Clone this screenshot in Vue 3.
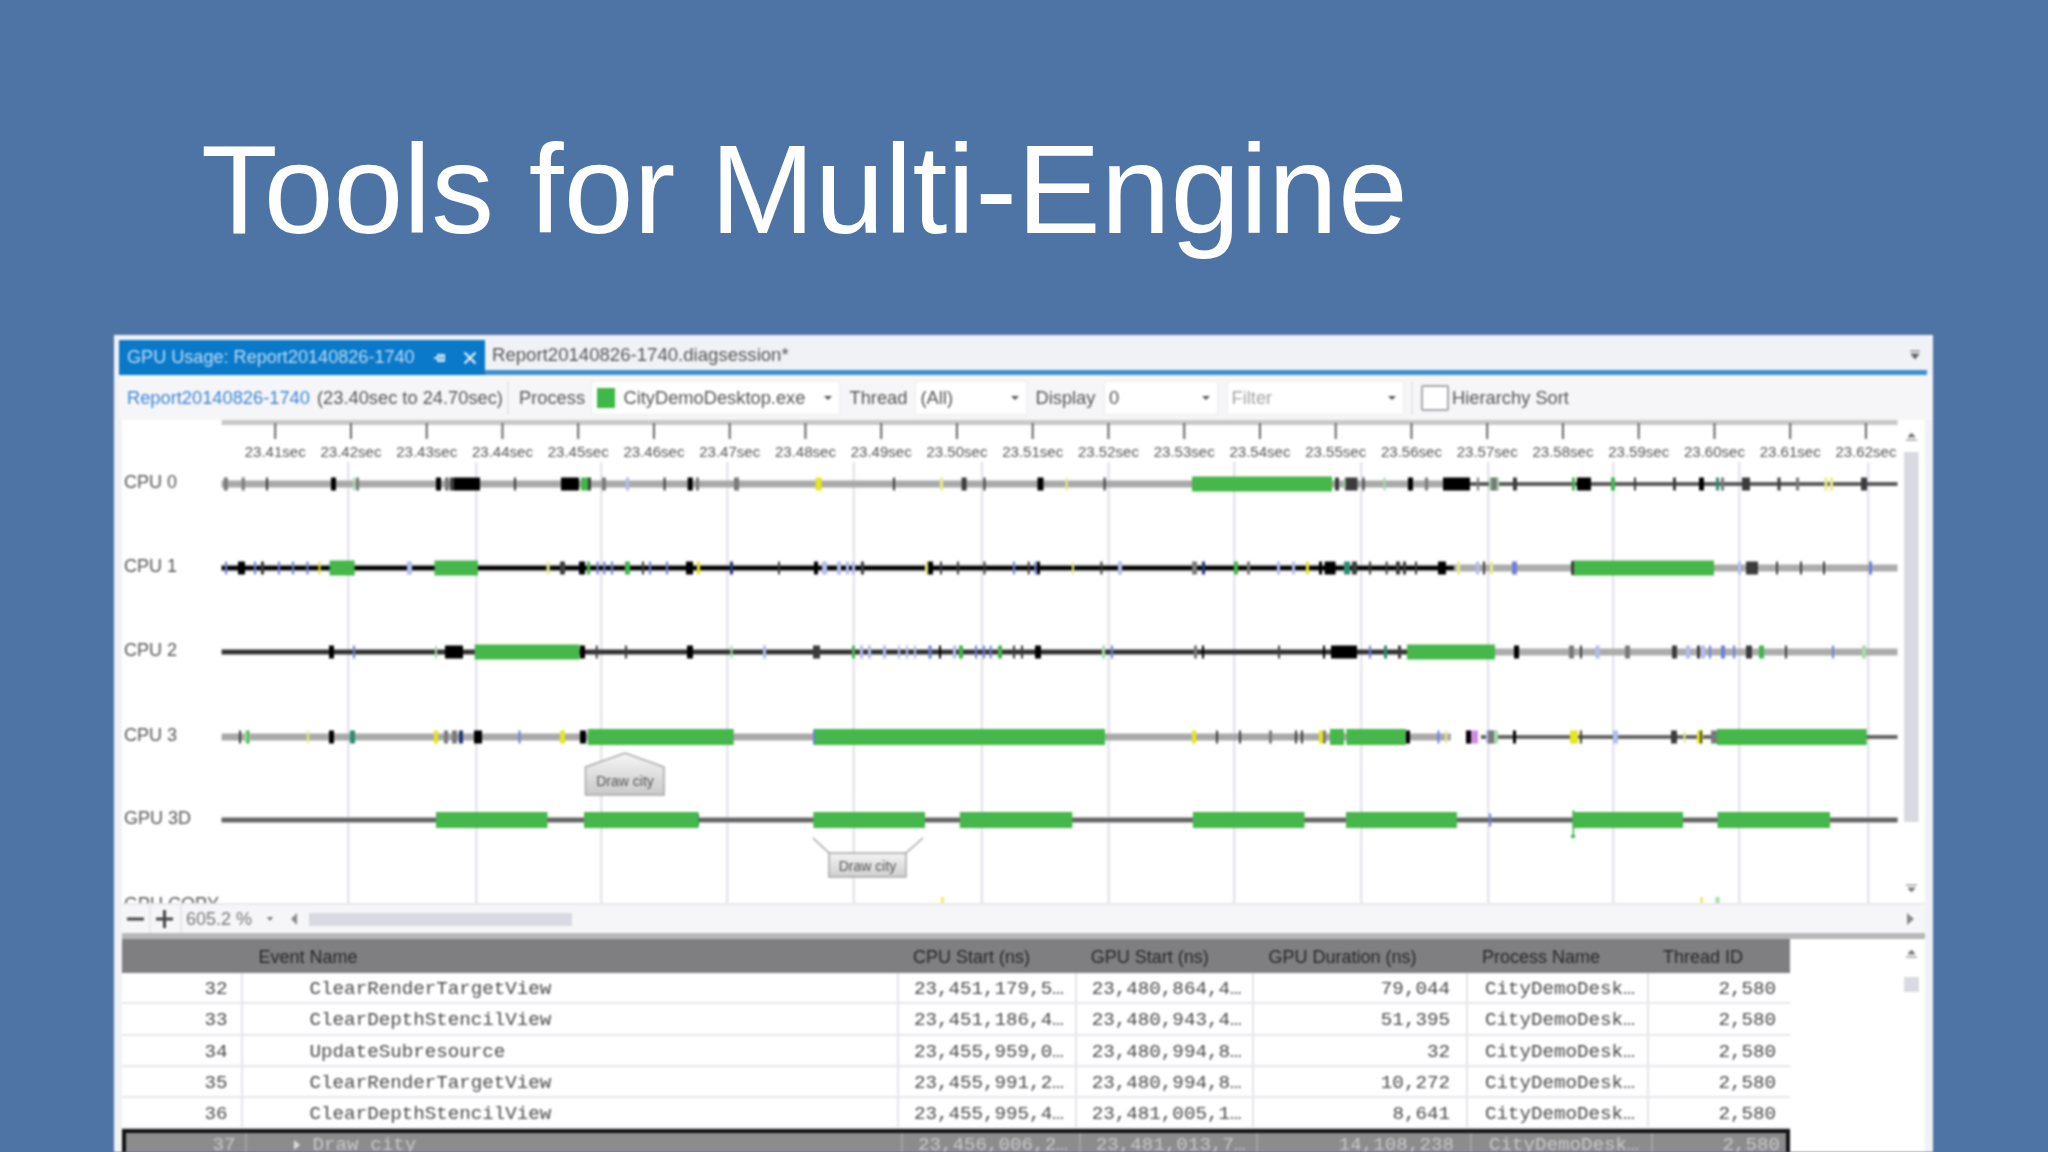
<script setup>
const colors = { k: '#000', d: '#3c3c3c', g: '#7a7a7a', b: '#6f7fd8', l: '#b3bcee', y: '#e4e81c', u: '#e9ec8a', n: '#3fb84a', m: '#a6dcab', t: '#2b8c72', p: '#d28be2', a: '#24337a' }

const ticks = Array.from({ length: 22 }, (_, i) => ({ x: 275.2 + 75.75 * i, label: (23.41 + i / 100).toFixed(2) + 'sec' }))
const grid = [348, 476, 601, 727, 853.6, 981.7, 1108.5, 1234, 1361, 1488, 1613, 1739, 1868]

const m = (s) => s.trim().split(/\s+/).map((t) => { const [x, w, c] = t.split(','); return { x: +x, w: +w, c: colors[c] } })

const tracks = [
  {
    label: 'CPU 0', y: 484,
    lines: [[221.6, 1470, 7, '#a9a9a9'], [1470, 1897.5, 4, '#5c5c5c']],
    greens: [[1192, 1332]], gh: 15,
    marks: m(`223.8,4,g 241.7,3,g 266,2,d 331,5,k 353,2,m 356,3,g 436,5,k 445,4,g 450,4,d 454,26,k 514,2,d 561,18,k 581,8,n 588,3,d 602,4,g 626,3,l 663.6,2,d 687.7,5,k 696,3,g 734,5,g 815.6,6,y 893,2,d 940,3,u 961.6,5,d 983.5,2,d 1037.5,6,k 1065.6,2,u 1103.6,2,d 1335,4,d 1344,2,m 1345.5,12,d 1362.5,2,d 1383.5,2,m 1408,5,k 1425,3,g 1443,27,k 1477,2,g 1489,10,m 1491,6,g 1513,4,d 1572,3,n 1577,14,k 1611,4,n 1634,2,d 1673,3,d 1699,5,k 1716,3,t 1721,3,g 1742,8,d 1777.5,3,d 1796,3,g 1824.5,3,u 1830,3,u 1861,6,d`)
  },
  {
    label: 'CPU 1', y: 568,
    lines: [[221.6, 1897.5, 7, '#acacac'], [221.6, 1454, 4, '#000']],
    greens: [[329.6, 354.6], [434.5, 478], [1572, 1714]], gh: 15,
    marks: m(`225,2,b 238,7,k 254,2,b 261,3,d 278,2,b 292,2,b 306.4,2,b 318.5,2,y 407,5,l 546.6,3,u 560,5,d 579,6,k 587,3,n 596.6,2,b 603.3,2,b 611,2,b 625,5,n 642,2,d 649,2,b 666,2,b 686,7,k 697,3,y 730,3,a 778,2,d 814,4,k 822,5,l 837,4,l 846,3,l 852,3,l 861,3,d 925,3,u 928,5,k 940,2,d 957,2,d 983.5,2,d 1013,2,b 1027.7,2,d 1034.5,2,b 1037,3,k 1072,2,u 1100.4,2,d 1118,4,l 1192,5,g 1202,3,a 1234,4,n 1247,3,g 1277,3,l 1292,3,l 1306,3,y 1319,3,k 1324.6,11,k 1344,6,t 1352,5,d 1369,2,d 1385.7,2,d 1396,4,d 1403,3,d 1415,2,d 1438,8,k 1457,3,u 1476,3,l 1483,2,d 1490,3,u 1512,5,b 1571,3,d 1738,3,l 1746,12,d 1776,2,d 1800,2,d 1823,2,d 1869,3,b`)
  },
  {
    label: 'CPU 2', y: 652,
    lines: [[221.6, 1407, 5, '#333'], [1407, 1897.5, 7, '#acacac']],
    greens: [[474.7, 579.6], [1407, 1495]], gh: 15,
    marks: m(`329,5,k 353,2,b 435,2,m 445,18,k 580,5,k 595.7,2,d 625,2,d 687,6,k 730.5,2,m 763,3,l 813,7,d 852,3,n 860,3,l 868,3,l 883,3,l 898,2,l 906,2,l 914,2,l 928.5,3,b 939,2,k 953,3,l 959,4,n 975,2,b 983,2,b 989.7,2,b 998,4,n 1013,2,d 1021,2,d 1035,6,k 1102,3,m 1111,2,b 1194,3,g 1202,2,k 1278,2,d 1323,2,k 1331,26,k 1369,2,b 1384,3,t 1398,3,d 1514,5,k 1569,5,g 1580,2,d 1595.5,4,l 1625,5,g 1672,5,d 1686,4,l 1697,3,d 1701,4,l 1709,2,b 1721,4,b 1733,2,b 1746,6,d 1759,5,n 1785,2,d 1832,2,b 1862,4,m`)
  },
  {
    label: 'CPU 3', y: 737,
    lines: [[221.6, 1451, 7, '#a9a9a9'], [1481, 1897.5, 4, '#666']],
    greens: [[587.7, 733.7], [813.4, 1105], [1330, 1344], [1346.4, 1405.8], [1717, 1866.7]], gh: 16,
    marks: m(`239,2,d 245,5,m 247,2,n 307,2,u 329,5,k 350,5,t 434,4,y 444,4,g 452,5,g 459,4,a 474,8,k 518.5,2,b 560,5,y 580,6,k 813,2,b 1192,4,y 1216,2,d 1239,2,d 1269,3,g 1295,2,d 1301,2,d 1319,4,y 1323,3,g 1406,4,k 1437.5,2,b 1445,2,u 1466,5,k 1471,7,p 1486,9,l 1488,6,g 1494,4,m 1513,3,k 1570,8,y 1580,2,d 1613,5,l 1671,6,d 1683.5,2,u 1697,6,y 1700,2,d 1711,6,g`)
  },
  {
    label: 'GPU 3D', y: 820,
    lines: [[221.6, 1897.5, 6, '#a9a9a9'], [221.6, 1897.5, 3, '#555']],
    greens: [[436, 547.5], [584, 698.4], [813.4, 925], [959.8, 1072.3], [1192.9, 1304.5], [1346, 1457], [1572.6, 1683], [1717.5, 1830]], gh: 16,
    marks: m(`698,1,t 1489,2,b`)
  }
]

const cols = [
  { t: '', c: '' }, { t: 'Event Name', c: 'h-event' }, { t: 'CPU Start (ns)', c: '' }, { t: 'GPU Start (ns)', c: '' },
  { t: 'GPU Duration (ns)', c: '' }, { t: 'Process Name', c: '' }, { t: 'Thread ID', c: '' }
]
const rows = [
  ['32', 'ClearRenderTargetView', '23,451,179,5…', '23,480,864,4…', '79,044'],
  ['33', 'ClearDepthStencilView', '23,451,186,4…', '23,480,943,4…', '51,395'],
  ['34', 'UpdateSubresource', '23,455,959,0…', '23,480,994,8…', '32'],
  ['35', 'ClearRenderTargetView', '23,455,991,2…', '23,480,994,8…', '10,272'],
  ['36', 'ClearDepthStencilView', '23,455,995,4…', '23,481,005,1…', '8,641']
]
</script>

<template>
  <div class="page">
    <header class="head"><h1 class="title">Tools for Multi-Engine</h1></header>
    <section class="win">
      <div class="tabs">
        <div class="tab">
          <span class="tab-text">GPU Usage: Report20140826-1740</span>
          <svg class="pin" width="14" height="12" viewBox="0 0 14 12"><path d="M1 6h4M5 3h6v6H5zM8 3v6" fill="none" stroke="#cfe6f7" stroke-width="2" /></svg>
          <svg class="close" width="14" height="14" viewBox="0 0 14 14"><path d="M1.5 1.5l11 11M12.5 1.5l-11 11" stroke="#e4f1fb" stroke-width="2.2" /></svg>
        </div>
        <span class="tab2">Report20140826-1740.diagsession*</span>
        <svg class="tab-menu" width="12" height="10" viewBox="0 0 12 10"><path d="M1 1h10M2 4h8l-4 5z" fill="#666" stroke="#666" /></svg>
      </div>

      <div class="toolbar">
        <span class="link">Report20140826-1740</span>
        <span class="range">(23.40sec to 24.70sec)</span>
        <i class="sep"></i>
        <span class="lbl w-process">Process</span>
        <div class="combo c-process">
          <i class="swatch"></i><span class="combo-text">CityDemoDesktop.exe</span><i class="arrow"></i>
        </div>
        <span class="lbl w-thread">Thread</span>
        <div class="combo c-thread"><span class="combo-text">(All)</span><i class="arrow"></i></div>
        <span class="lbl w-display">Display</span>
        <div class="combo c-display"><span class="combo-text">0</span><i class="arrow"></i></div>
        <div class="combo c-filter"><span class="combo-text muted">Filter</span><i class="arrow"></i></div>
        <i class="sep sep2"></i>
        <i class="check"></i>
        <span class="lbl">Hierarchy Sort</span>
      </div>

      <svg class="chart" width="1803" height="485" viewBox="122 420 1803 485">
        <defs>
          <linearGradient id="up" x1="0" y1="0" x2="0" y2="1"><stop offset="0" stop-color="#f6f6f6" /><stop offset="1" stop-color="#c9c9c9" /></linearGradient>
          <linearGradient id="down" x1="0" y1="0" x2="0" y2="1"><stop offset="0" stop-color="#bdbdbd" /><stop offset=".45" stop-color="#f0f0f0" /><stop offset="1" stop-color="#cfcfcf" /></linearGradient>
          <clipPath id="rulerclip"><rect x="122" y="420" width="1775.5" height="60" /></clipPath>
        </defs>
        <rect x="221.6" y="420" width="1676" height="5" fill="#c9c9c9" />
        <g clip-path="url(#rulerclip)">
          <g v-for="t in ticks" :key="t.x">
            <rect :x="t.x - 1" y="423" width="2" height="16" fill="#666" />
            <text :x="t.x" y="457" text-anchor="middle" class="tick-label">{{ t.label }}</text>
          </g>
        </g>
        <rect v-for="g in grid" :key="g" :x="g - 1" y="462" width="2.4" height="441" fill="#e3e4ec" />

        <g v-for="tr in tracks" :key="tr.label">
          <text x="124" :y="tr.y + 4" class="track-label">{{ tr.label }}</text>
          <rect v-for="(l, i) in tr.lines" :key="'l' + i" :x="l[0]" :y="tr.y - l[2] / 2" :width="l[1] - l[0]" :height="l[2]" :fill="l[3]" />
          <rect v-for="(g, i) in tr.greens" :key="'g' + i" :x="g[0]" :y="tr.y - tr.gh / 2" :width="g[1] - g[0]" :height="tr.gh" fill="#45b74b" />
          <rect v-for="(k, i) in tr.marks" :key="'m' + i" :x="k.x" :y="tr.y - 6.5" :width="k.w" height="13" :fill="k.c" />
        </g>

        <rect x="1572.6" y="810" width="1.6" height="28" fill="#3fb84a" />
        <rect x="1571" y="835" width="4" height="3" fill="#3fb84a" />

        <g>
          <polygon points="585.5,767 625,753 664,767 664,795 585.5,795" fill="url(#up)" stroke="#a8a8a8" stroke-width="1.5" />
          <text x="625" y="786" text-anchor="middle" class="callout">Draw city</text>
        </g>
        <g>
          <polygon points="813,838 829,853 829,877 906,877 906,853 923,838 906,853 829,853" fill="url(#down)" stroke="#a8a8a8" stroke-width="1.5" />
          <text x="867.5" y="871" text-anchor="middle" class="callout">Draw city</text>
        </g>

        <text x="124" y="910" class="track-label">GPU COPY</text>
        <rect x="941.5" y="897" width="2" height="6" fill="#e4e81c" />
        <rect x="1700.5" y="897" width="2" height="6" fill="#e4e81c" />
        <rect x="1715.5" y="897" width="4" height="6" fill="#a6dcab" />

        <rect x="1904" y="452" width="14.6" height="370" fill="#d9dae1" />
        <path d="M1906 440h11M1908 437h7l-3.500-4z" fill="#777" stroke="#777" />
        <path d="M1906 885h11M1908 888h7l-3.500 4z" fill="#777" stroke="#777" />
        <rect x="122" y="903" width="1803" height="2" fill="#e9e9ed" />
      </svg>

      <div class="zoombar">
        <svg class="zb-icon" width="27" height="28" viewBox="0 0 27 28"><path d="M5 14h17" stroke="#444" stroke-width="3" /></svg>
        <svg class="zb-icon" width="29" height="28" viewBox="0 0 29 28"><path d="M5 14h17M13.500 5v18" stroke="#444" stroke-width="3" /></svg>
        <span class="pct">605.2 %</span>
        <i class="zb-drop"></i>
        <i class="zb-left"></i>
        <i class="zb-thumb"></i>
        <i class="zb-right"></i>
      </div>

      <div class="lower">
        <div class="table">
          <div class="row header">
            <span v-for="c in cols" :key="c.t" class="hcell" :class="c.c">{{ c.t }}</span>
          </div>
          <div v-for="r in rows" :key="r[0]" class="row body">
            <span class="cell num">{{ r[0] }}</span>
            <span class="cell name">{{ r[1] }}</span>
            <span class="cell">{{ r[2] }}</span>
            <span class="cell">{{ r[3] }}</span>
            <span class="cell dur">{{ r[4] }}</span>
            <span class="cell proc">CityDemoDesk…</span>
            <span class="cell tid">2,580</span>
          </div>
          <div class="row body selected">
            <span class="cell num">37</span>
            <span class="cell name"><i class="expander"></i>Draw city</span>
            <span class="cell">23,456,006,2…</span>
            <span class="cell">23,481,013,7…</span>
            <span class="cell dur">14,108,238</span>
            <span class="cell proc">CityDemoDesk…</span>
            <span class="cell tid">2,580</span>
          </div>
        </div>
        <div class="tscroll">
          <svg width="15" height="10" viewBox="0 0 15 10" class="t-up"><path d="M2 8h11M4 5h7L7.500 1z" fill="#777" stroke="#777" /></svg>
          <i class="t-thumb"></i>
        </div>
      </div>
    </section>
  </div>
</template>

<style scoped>
.page { width: 2048px; height: 1152px; overflow: hidden; background: #4e74a5; font-family: "Liberation Sans", Arial, sans-serif; }
.head { height: 335px; box-sizing: border-box; padding: 127px 0 0 201px; }
.title { margin: 0; font-size: 125.500px; line-height: 125px; font-weight: 400; color: #fff; white-space: nowrap; }

.win { margin-left: 113.6px; width: 1819.4px; height: 817px; box-sizing: border-box; background: #f1f2f6; padding-left: 5.4px; display: flex; flex-direction: column; filter: blur(.8px); overflow: hidden; }

.tabs { height: 30px; padding-top: 5px; flex: none; width: 1808px; box-sizing: content-box; border-bottom: 5px solid #3a90d2; display: flex; align-items: stretch; position: relative; color: #555; font-size: 18.100px; }
.tab { width: 366px; background: #0a79c9; display: flex; align-items: center; padding-left: 8px; box-sizing: border-box; color: #bcdcf4; height: 35px; }
.tab-text { width: 292px; white-space: nowrap; }
.pin { margin-left: 14px; }
.close { margin-left: 16px; }
.tab2 { margin-left: 7px; align-self: center; white-space: nowrap; font-size: 18.600px; }
.tab-menu { margin-left: auto; margin-right: 6px; align-self: center; }

.toolbar { height: 45px; flex: none; box-sizing: border-box; display: flex; align-items: center; font-size: 18.300px; color: #555; padding-left: 8px; background: #f6f6f8; white-space: nowrap; }
.link { color: #3c86d6; width: 190px; }
.range { width: 186px; }
.sep { width: 2px; height: 34px; background: #e6e6ea; margin: 0 10px 0 4px; }
.sep2 { margin: 0 8px 0 7px; }
.lbl { flex: none; }
.w-process { width: 72.500px; }
.w-thread { width: 66px; }
.w-display { width: 68.600px; }
.combo { height: 34px; background: #fff; border: 1px solid #eceded; box-sizing: border-box; display: flex; align-items: center; position: relative; flex: none; }
.combo-text { margin-left: 4px; }
.muted { color: #a5a5a5; }
.arrow { position: absolute; right: 7px; top: 14px; width: 0; height: 0; border-left: 4px solid transparent; border-right: 4px solid transparent; border-top: 4px solid #555; }
.c-process { width: 249px; margin-right: 9px; }
.swatch { width: 18px; height: 20px; background: #3fb84a; margin-left: 5px; margin-right: 4px; }
.c-thread { width: 112px; margin-right: 8px; }
.c-display { width: 113.500px; margin-right: 9px; }
.c-filter { width: 177.500px; }
.check { width: 24px; height: 22px; background: #fff; border: 2px solid #a8a8ac; border-radius: 2px; margin-right: 3px; flex: none; }

.chart { flex: none; display: block; margin-left: 3px; background: #fff; }
.tick-label { font-size: 15px; fill: #555; }
.track-label { font-size: 18px; fill: #555; }
.callout { font-size: 14px; fill: #555; }

.zoombar { height: 28px; flex: none; background: #f6f6f8; margin-left: 3px; width: 1803px; display: flex; align-items: center; position: relative; color: #777; }
.zb-icon { border-right: 2px solid #e8e8ec; flex: none; box-sizing: content-box; }
.pct { margin-left: 4px; font-size: 18px; width: 76px; white-space: nowrap; }
.zb-drop { width: 0; height: 0; border-left: 3.500px solid transparent; border-right: 3.500px solid transparent; border-top: 4px solid #777; margin-left: 5px; }
.zb-left { width: 0; height: 0; border-top: 6px solid transparent; border-bottom: 6px solid transparent; border-right: 6px solid #888; margin-left: 18px; }
.zb-thumb { width: 263px; height: 13px; background: #d9dae1; margin-left: 12px; }
.zb-right { width: 0; height: 0; border-top: 6px solid transparent; border-bottom: 6px solid transparent; border-left: 7px solid #888; margin-left: auto; margin-right: 11px; }

.lower { flex: 1; margin-left: 3px; width: 1803px; border-top: 6px solid #b7b7b9; background: #fff; display: flex; min-height: 0; }
.table { width: 1668px; flex: none; }
.row { display: grid; grid-template-columns: 120.600px 656.400px 177.800px 177.700px 213.500px 181px 141px; }
.header { height: 34px; background: #7f7f82; font-size: 18px; color: #262626; align-items: center; }
.hcell { padding: 3px 0 0 14px; white-space: nowrap; }
.h-event { padding-left: 16px; }
.body { height: 31.300px; box-sizing: border-box; border-bottom: 2px solid #e6e7ec; font: 19.200px/29px "Liberation Mono", monospace; color: #4a4a4a; }
.cell { border-right: 2px solid #e4e5ec; padding-left: 15px; padding-top: 2px; white-space: pre; overflow: hidden; }
.cell.num { text-align: right; padding-right: 13px; padding-left: 0; }
.cell.name { padding-left: 67px; }
.cell.dur { text-align: right; padding-right: 16px; padding-left: 0; }
.cell.proc { padding-left: 17px; }
.cell.tid { text-align: right; padding-right: 14px; padding-left: 0; border-right: 0; }
.selected { height: 36px; border: 4px solid #111; background: #8c8c8d; color: #c9c9cb; line-height: 25px; }
.selected .cell { border-right-color: #a2a2a4; padding-top: 0; }
.selected .cell.num { padding-right: 9px; }
.expander { display: inline-block; width: 0; height: 0; border-top: 5px solid transparent; border-bottom: 5px solid transparent; border-left: 6px solid #ddd; margin: 0 13px 0 -20px; }

.tscroll { margin-left: 114px; width: 15px; display: flex; flex-direction: column; align-items: center; }
.t-up { margin-top: 10px; }
.t-thumb { width: 15px; height: 15px; background: #d9dae1; margin-top: 18px; }
</style>
